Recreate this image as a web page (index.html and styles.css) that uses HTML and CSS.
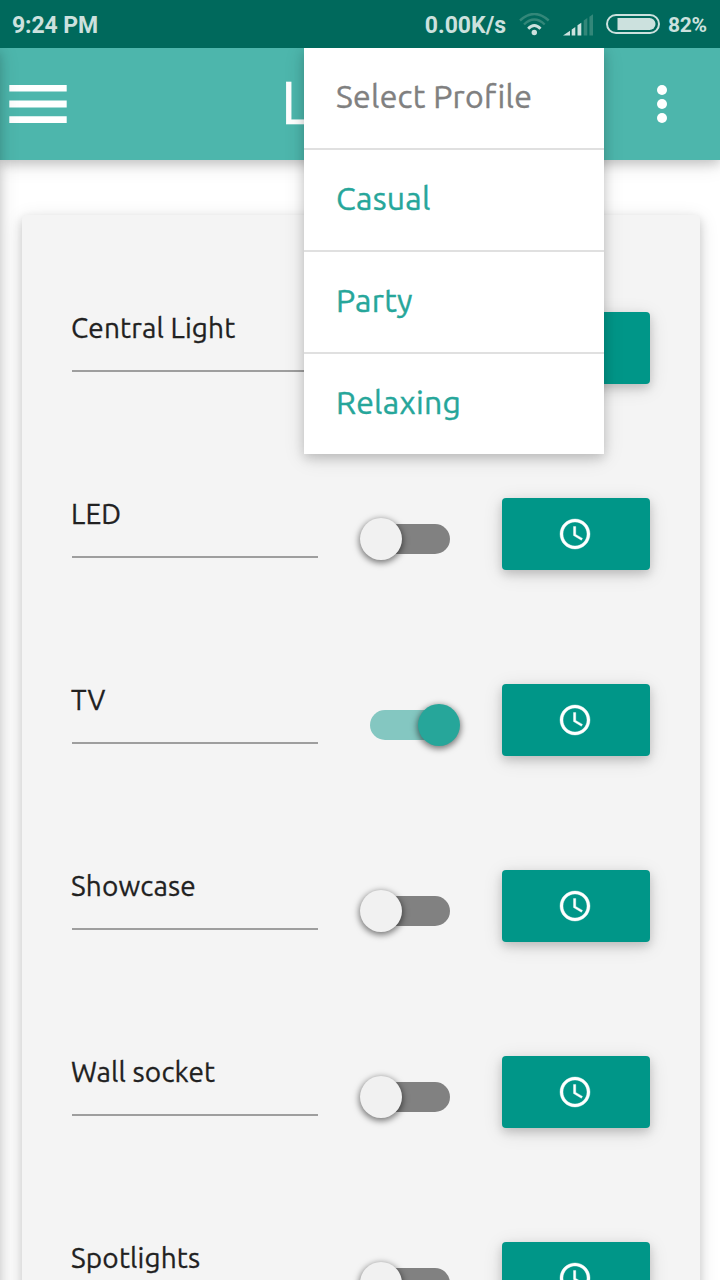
FILE: index.html
```
<!DOCTYPE html>
<html lang="en">
<head>
<meta charset="utf-8">
<title>Room control</title>
<link rel="stylesheet" href="styles.css">
</head>
<body>
<svg class="defs" width="0" height="0" aria-hidden="true">
  <symbol id="clock" viewBox="0 0 24 24">
    <path d="M11.99 2C6.47 2 2 6.48 2 12s4.47 10 9.99 10C17.52 22 22 17.52 22 12S17.52 2 11.99 2zM12 20c-4.42 0-8-3.58-8-8s3.58-8 8-8 8 3.58 8 8-3.58 8-8 8zM12.5 7H11v6l5.25 3.15.75-1.23-4.5-2.67z"/>
  </symbol>
</svg>
<div class="screen">
  <div class="status">
    <span class="time">9:24 PM</span>
    <span class="speed">0.00K/s</span>
    <svg class="wifi" width="31" height="24" viewBox="0 0 31 24" fill="none" stroke-width="2.4">
      <path class="dim" d="M1 7.500Q15.300 -5.500 29.700 7.500M5 11.500Q15.300 1.700 25.700 11.500"/>
      <path class="lit" d="M9.200 15.800Q15.300 9.200 21.500 15.800" stroke-width="2.800"/>
      <circle class="dot" cx="15.300" cy="19.500" r="2.700"/>
    </svg>
    <svg class="signal" width="31" height="21" viewBox="0 0 31 21">
      <path class="bar" d="M0 20.500l7-4.700v4.700zM8.700 14.500l3.600-2.500v8.500H8.700zM14.500 10.200l3.800-2.500v12.800h-3.800z"/>
      <path class="bar off" d="M20.700 5.500l3.600-2.500v17.500h-3.600zM26.400 1.700l3.600-2.500v21.300h-3.600z"/>
    </svg>
    <svg class="battery" width="54" height="20" viewBox="0 0 54 20">
      <rect class="shell" x="1" y="1" width="52" height="18" rx="9"/>
      <path class="bar" d="M11.500 4H43.500a6 6 0 0 1 0 12H11.500z"/>
    </svg>
    <span class="percent">82%</span>
  </div>
  <div class="page">
    <header class="navbar">
      <svg class="burger" width="58" height="38" viewBox="0 0 58 38"><path d="M.3 0h57.400v6.500H.3zM.3 15.500h57.400v7H.3zM.3 31.300h57.400v6.700H.3z"/></svg>
      <h1 class="title">L</h1>
      <svg class="more" width="10" height="38" viewBox="0 0 10 38"><circle cx="5" cy="5" r="5"/><circle cx="5" cy="19" r="5"/><circle cx="5" cy="33" r="5"/></svg>
    </header>
    <main class="card">
      <div class="row"><span class="field">Central Light</span><span class="switch"><i class="thumb"></i></span><button class="btn"><svg><use href="#clock"/></svg></button></div>
      <div class="row"><span class="field">LED</span><span class="switch"><i class="thumb"></i></span><button class="btn"><svg><use href="#clock"/></svg></button></div>
      <div class="row"><span class="field">TV</span><span class="switch on"><i class="thumb"></i></span><button class="btn"><svg><use href="#clock"/></svg></button></div>
      <div class="row"><span class="field">Showcase</span><span class="switch"><i class="thumb"></i></span><button class="btn"><svg><use href="#clock"/></svg></button></div>
      <div class="row"><span class="field">Wall socket</span><span class="switch"><i class="thumb"></i></span><button class="btn"><svg><use href="#clock"/></svg></button></div>
      <div class="row"><span class="field">Spotlights</span><span class="switch"><i class="thumb"></i></span><button class="btn"><svg><use href="#clock"/></svg></button></div>
    </main>
    <div class="drawer"></div>
    <ul class="menu">
      <li class="item heading"><span>Select Profile</span></li>
      <li class="item"><span>Casual</span></li>
      <li class="item"><span>Party</span></li>
      <li class="item"><span>Relaxing</span></li>
    </ul>
  </div>
</div>
</body>
</html>
```

FILE: styles.css
```
* { box-sizing: border-box; }
body { margin: 0; background: #fff; font-family: Ubuntu, "Noto Sans", sans-serif; }
.defs { display: block; position: absolute; }
.screen { width: 720px; height: 1280px; overflow: hidden; display: flex; flex-direction: column; }

.status { height: 48px; flex: none; background: #00695c; display: flex; align-items: center; padding: 2px 13px 0 12px; color: #cce1de; font-family: Roboto, sans-serif; font-weight: 700; font-size: 23px; white-space: nowrap; }
.time { letter-spacing: -.1px; }
.speed { margin-left: auto; }
.wifi { margin-left: 13px; }
.signal { margin-left: 13px; overflow: visible; }
.battery { flex: none; margin: 0 8px 2px 12px; }
.percent { font-size: 21px; width: 39px; letter-spacing: -.3px; }
.dim { stroke: #338779; }
.lit { stroke: #cce1de; }
.dot, .bar { fill: #cce1de; }
.bar.off { fill: #338779; }
.shell { fill: none; stroke: #cce1de; stroke-width: 2; }

.page { position: relative; flex: 1; overflow: hidden; }
.navbar { height: 112px; background: #4db6ac; display: flex; align-items: center; padding: 0 53px 0 9px; box-shadow: 0 4px 10px rgba(0,0,0,.16), 0 4px 20px rgba(0,0,0,.12); }
.burger, .more { fill: #fff; display: block; }
.title { margin: 0 auto 0 214px; color: #fff; font-size: 60px; line-height: 108px; height: 112px; font-weight: 400; -webkit-text-stroke: .7px #fff; }

.card { width: 678px; margin: 55px 0 0 22px; padding: 97px 50px 0; height: 1200px; background: #f4f4f4; border-radius: 4px; box-shadow: 0 4px 10px rgba(0,0,0,.16), 0 4px 20px rgba(0,0,0,.12); display: flex; flex-direction: column; gap: 114px; }
.row { height: 72px; flex: none; display: flex; align-items: flex-start; }
.field { width: 246px; height: 60px; border-bottom: 2px solid #9e9e9e; color: #212121; font-size: 28px; line-height: 32px; letter-spacing: .15px; text-indent: -1px; white-space: nowrap; -webkit-text-stroke: .3px #212121; }
.switch { margin: 26px 52px 0; width: 80px; height: 30px; border-radius: 15px; background: #818181; display: flex; align-items: center; }
.thumb { flex: none; width: 42px; height: 42px; margin-left: -10px; border-radius: 21px; background: #f1f1f1; box-shadow: 0 2px 6px 1px rgba(0,0,0,.5); }
.switch.on { background: #84c7c1; justify-content: flex-end; }
.on .thumb { background: #26a69a; margin: 0 -10px 0 0; }
.btn { width: 148px; height: 72px; padding: 0 2px 0 0; border: 0; border-radius: 4px; background: #009688; display: flex; align-items: center; justify-content: center; box-shadow: 0 4px 10px rgba(0,0,0,.16), 0 4px 20px rgba(0,0,0,.12); }
.btn svg { width: 36px; height: 36px; fill: #fff; stroke: #fff; stroke-width: .25px; }

.drawer { position: absolute; left: -100px; top: 0; width: 100px; height: 1300px; box-shadow: 0 4px 10px rgba(0,0,0,.16), 0 4px 20px rgba(0,0,0,.12); }
.menu { position: absolute; left: 304px; top: 0; width: 300px; margin: 0; padding: 0; list-style: none; background: #fff; box-shadow: 0 4px 10px rgba(0,0,0,.16), 0 4px 20px rgba(0,0,0,.12); }
.item { height: 102px; padding: 26px 32px 0; border-bottom: 2px solid #e0e0e0; color: #26a69a; font-size: 32px; line-height: 44px; letter-spacing: .27px; white-space: nowrap; -webkit-text-stroke: .4px #26a69a; }
.item:last-child { height: 100px; border-bottom: 0; }
.heading { color: #808080; -webkit-text-stroke-color: #808080; }
```
